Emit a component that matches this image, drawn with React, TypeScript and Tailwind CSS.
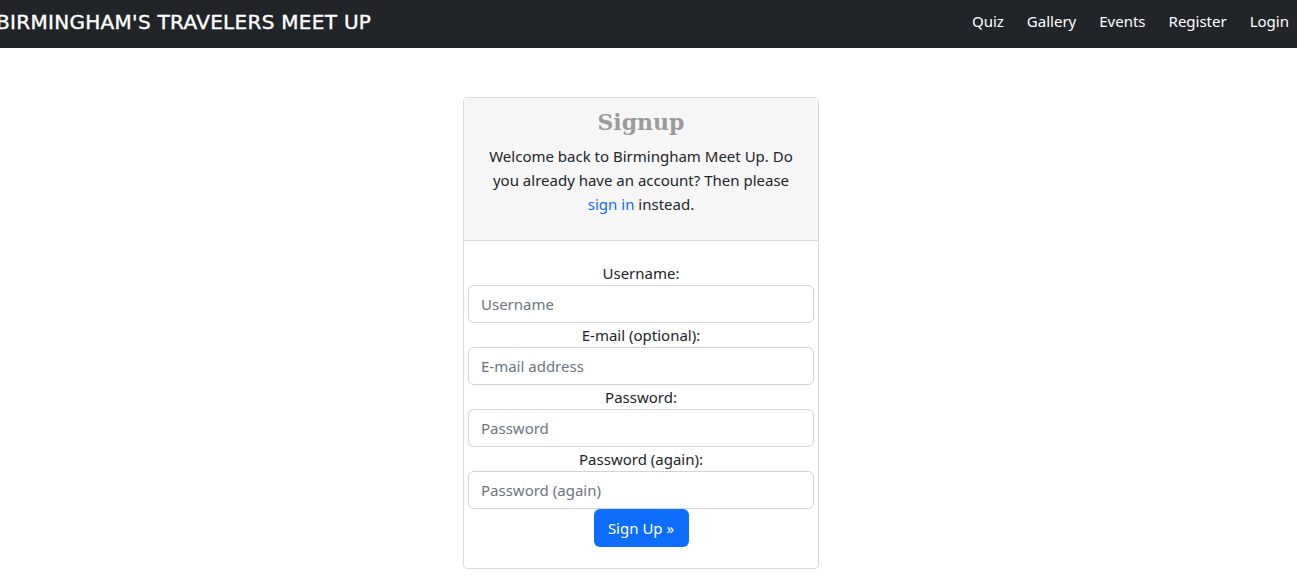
export default function App() {
  const fields = [
    { label: "Username:", placeholder: "Username", type: "text" },
    { label: "E-mail (optional):", placeholder: "E-mail address", type: "email" },
    { label: "Password:", placeholder: "Password", type: "password" },
    { label: "Password (again):", placeholder: "Password (again)", type: "password" },
  ];

  return (
    <div className="min-h-screen bg-white text-[#212529] font-['Noto_Sans',sans-serif]">
      {/* Navbar */}
      <nav className="flex h-12 items-center justify-between bg-[#212529] pr-2 pb-[5px]">
        <a
          href="#"
          className="-ml-[4px] whitespace-nowrap font-['DejaVu_Sans',sans-serif] text-[20px] tracking-[0.3px] text-white [-webkit-text-stroke:0.4px_white]"
        >
          BIRMINGHAM'S TRAVELERS MEET UP
        </a>
        <ul className="flex items-center gap-[23px] text-[15px] text-white">
          {["Quiz", "Gallery", "Events", "Register", "Login"].map((item) => (
            <li key={item}>
              <a href="#">{item}</a>
            </li>
          ))}
        </ul>
      </nav>

      {/* Signup card */}
      <div className="flex justify-center pt-[49px] pr-[15px]">
        <div className="w-[356px] rounded-[4px] border border-[#dcdcdc] text-center">
          <div className="border-b border-[#dcdcdc] bg-[#f6f6f6] px-4 pt-[7px] pb-[24px]">
            <h1 className="font-['DejaVu_Serif',serif] text-[22px] font-bold leading-[34px] text-[#9b9b9b]">
              Signup
            </h1>
            <p className="mt-[5px] text-[15px] leading-[24px]">
              Welcome back to Birmingham Meet Up. Do you already have an account? Then please{" "}
              <a href="#" className="text-[#0d6efd]">
                sign in
              </a>{" "}
              instead.
            </p>
          </div>

          <form className="flex flex-col px-[4px] pt-[20px] pb-[21px]">
            {fields.map((f) => (
              <div key={f.label} className="flex flex-col">
                <label className="text-[15px] leading-[24px]">{f.label}</label>
                <input
                  type={f.type}
                  placeholder={f.placeholder}
                  className="h-[38px] rounded-[6px] border border-[#ced4da] px-3 text-[15px] placeholder:text-[#6c757d]"
                />
              </div>
            ))}
            <div className="flex justify-center">
              <button
                type="button"
                className="h-[38px] w-[95px] rounded-[6px] bg-[#0d6efd] text-[15px] text-white"
              >
                Sign Up »
              </button>
            </div>
          </form>
        </div>
      </div>
    </div>
  );
}
